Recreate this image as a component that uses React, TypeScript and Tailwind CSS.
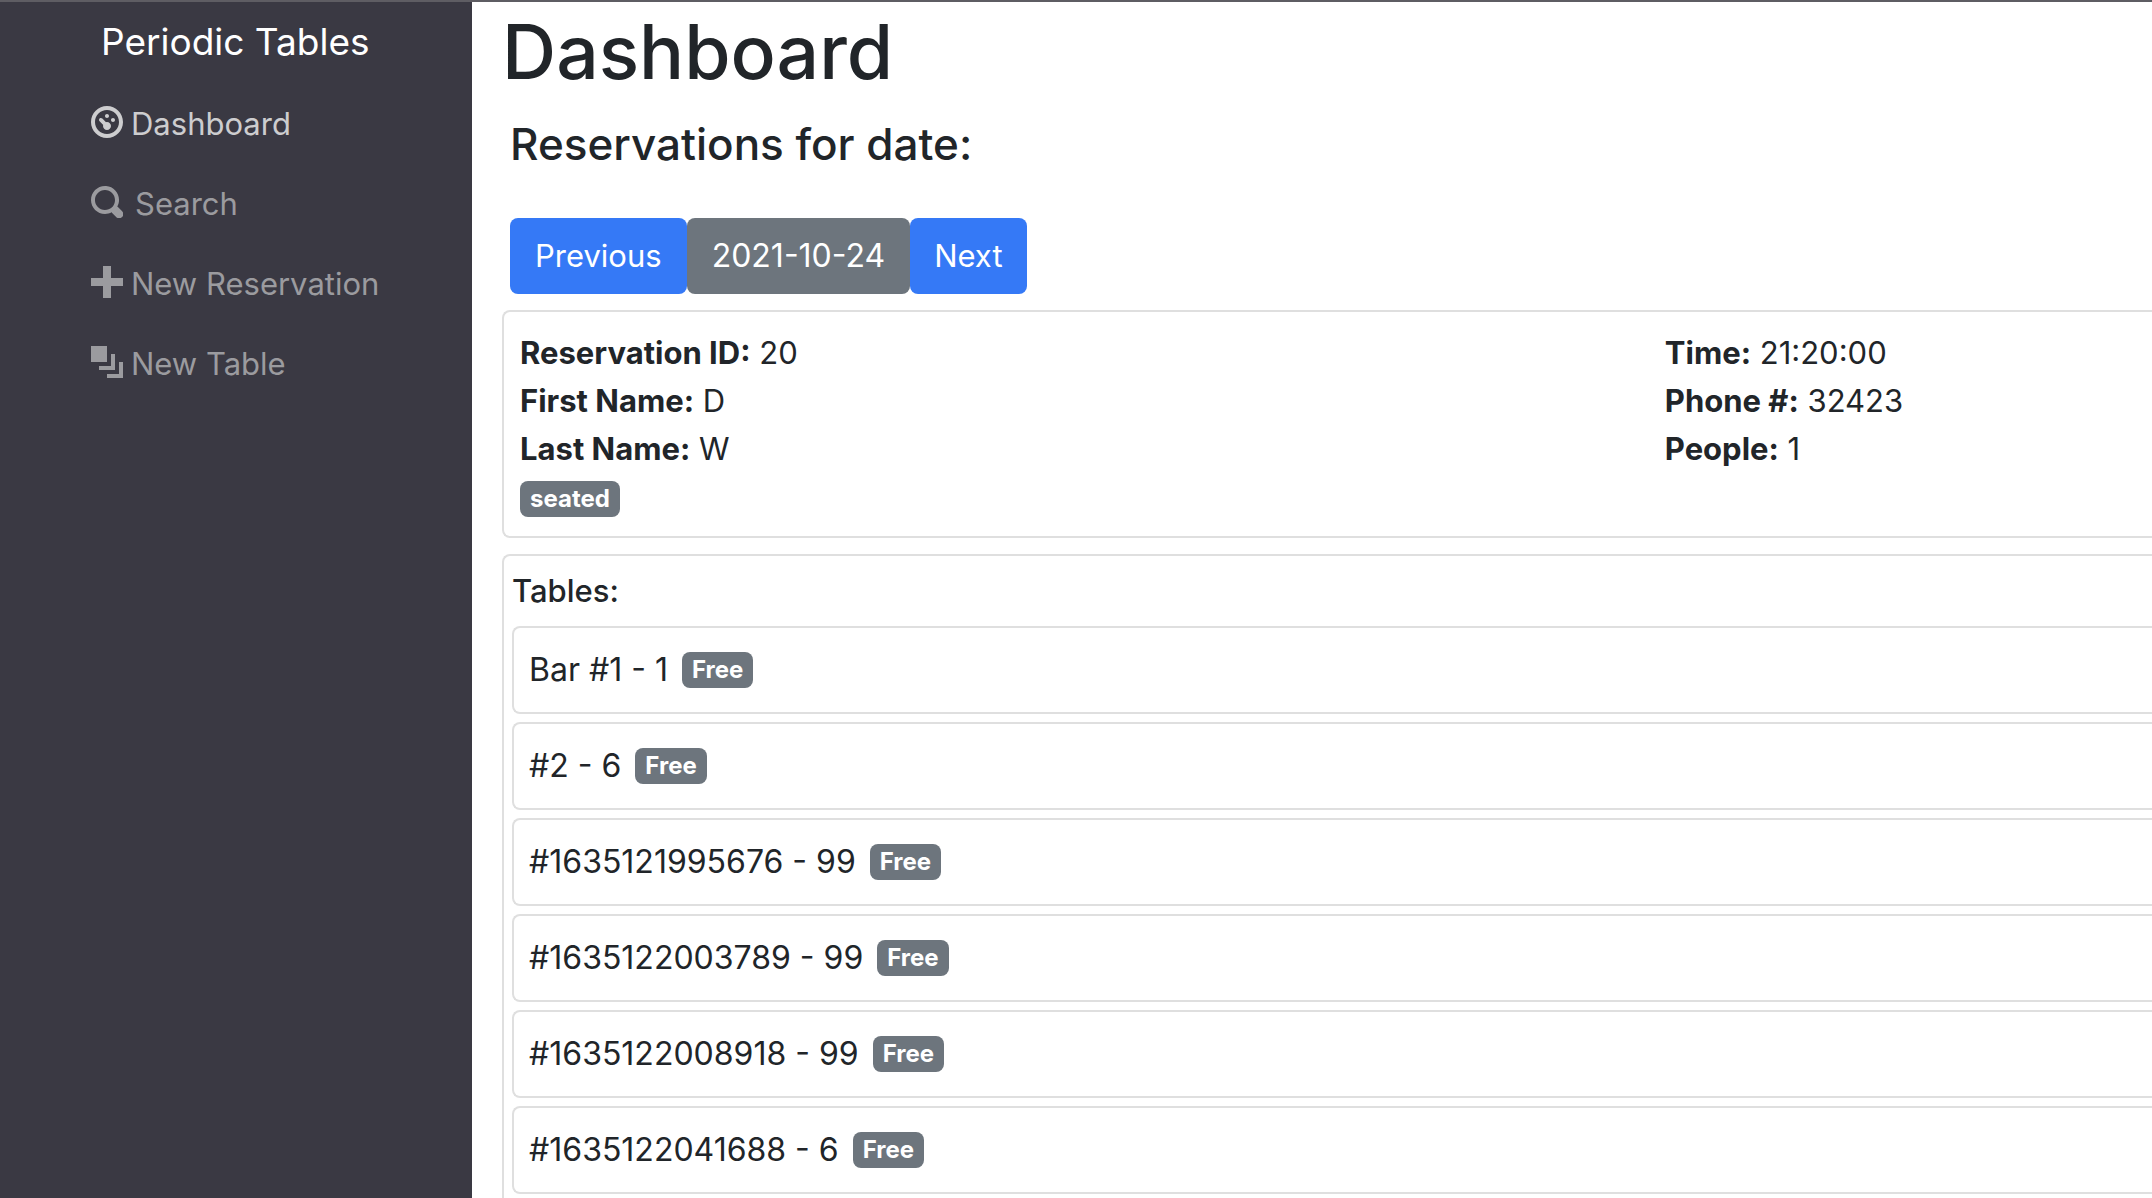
import React from "react";

const icons = {
  dashboard:
    "M4 0c-2.2 0-4 1.8-4 4s1.8 4 4 4 4-1.8 4-4-1.8-4-4-4zm0 1c1.66 0 3 1.34 3 3s-1.34 3-3 3-3-1.34-3-3 1.34-3 3-3zm0 1c-.28 0-.5.22-.5.5s.22.5.5.5.5-.22.5-.5-.22-.5-.5-.5zm-1.66 1a.5.5 0 0 0-.19.84l.91.91c-.02.08-.06.16-.06.25 0 .55.45 1 1 1s1-.45 1-1-.45-1-1-1c-.09 0-.17.04-.25.06l-.91-.91a.5.5 0 0 0-.44-.16.5.5 0 0 0-.06 0zm3.16 0c-.28 0-.5.22-.5.5s.22.5.5.5.5-.22.5-.5-.22-.5-.5-.5z",
  search:
    "M3.5 0c-1.93 0-3.5 1.57-3.5 3.5s1.57 3.5 3.5 3.5c.59 0 1.17-.14 1.66-.41a1 1 0 0 0 .13.13l1 1a1.02 1.02 0 1 0 1.44-1.44l-1-1a1 1 0 0 0-.16-.13c.27-.49.44-1.06.44-1.66 0-1.93-1.55-3.5-3.5-3.5zm0 1c1.39 0 2.5 1.11 2.5 2.5 0 .66-.24 1.27-.66 1.72-.01.01-.02.02-.03.03a1 1 0 0 0-.13.13c-.44.4-1.04.63-1.69.63-1.39 0-2.5-1.11-2.5-2.5s1.11-2.5 2.5-2.5z",
  plus: "M3 0v3h-3v2h3v3h2v-3h3v-2h-3v-3h-2z",
  layers: "M0 0v4h4v-4h-4zm5 2v3h-3v1h4v-4h-1zm2 2v3h-3v1h4v-4h-1z",
};

function NavItem({ icon, label, active = false, wide = false }: {
  icon: keyof typeof icons;
  label: string;
  active?: boolean;
  wide?: boolean;
}) {
  return (
    <li>
      <a
        href="#"
        className={`flex h-20 items-center ${wide ? "gap-3" : "gap-2"} ${active ? "text-[#cdcdcf]" : "text-[#9b9b9f]"}`}
      >
        <span className="pb-1">
          <svg viewBox="0 0 8 8" className="size-8" fill="currentColor" aria-hidden="true">
            <path d={icons[icon]} />
          </svg>
        </span>
        <span>{label}</span>
      </a>
    </li>
  );
}

function Badge({ children }: { children: React.ReactNode }) {
  return (
    <span className="inline-flex h-9 items-center rounded-lg bg-[#6d757d] px-2.5 text-2xl font-bold text-white">
      {children}
    </span>
  );
}

function Field({ label, value }: { label: string; value: string }) {
  return (
    <p>
      <strong className="font-bold">{label}</strong> {value}
    </p>
  );
}

const tables = [
  "Bar #1 - 1",
  "#2 - 6",
  "#1635121995676 - 99",
  "#1635122003789 - 99",
  "#1635122008918 - 99",
  "#1635122041688 - 6",
];

export default function App() {
  return (
    <div className="flex min-h-screen overflow-hidden border-t-2 border-[#5e5d63] bg-white font-['Inter',sans-serif] text-[31px] leading-[48px] text-[#212529]">
      <nav className="w-[472px] shrink-0 bg-[#3a3943] pl-[91px]">
        <a href="#" className="block px-2.5 pb-[18px] pt-4 text-[37px] text-white">
          Periodic Tables
        </a>
        <ul>
          <NavItem icon="dashboard" label="Dashboard" active />
          <NavItem icon="search" label="Search" wide />
          <NavItem icon="plus" label="New Reservation" />
          <NavItem icon="layers" label="New Table" />
        </ul>
      </nav>

      <main className="flex min-w-0 flex-1 flex-col pl-[30px]">
        <h1 className="pt-0.5 text-[75px] leading-[96px] font-medium">Dashboard</h1>
        <div className="px-2">
          <h2 className="pb-11 pt-3.5 text-[44px] leading-[60px] font-medium">Reservations for date:</h2>
          <div className="flex text-white">
            <button type="button" className="h-[76px] rounded-lg bg-[#3579f6] px-[25px]">Previous</button>
            <button type="button" className="h-[76px] rounded-lg bg-[#6d757d] px-[25px] text-[32px]">2021-10-24</button>
            <button type="button" className="h-[76px] rounded-lg bg-[#3579f6] px-6">Next</button>
          </div>
        </div>

        <section className="mt-4 grid grid-cols-[7fr_3fr] gap-x-2 rounded-l-lg border-2 border-r-0 border-[#dfdfdf] pb-[15px] pl-4 pt-[17px]">
          <div>
            <Field label="Reservation ID:" value="20" />
            <Field label="First Name:" value="D" />
            <Field label="Last Name:" value="W" />
            <div className="flex h-12 items-start pt-2">
              <Badge>seated</Badge>
            </div>
          </div>
          <div>
            <Field label="Time:" value="21:20:00" />
            <Field label="Phone #:" value="32423" />
            <Field label="People:" value="1" />
          </div>
        </section>

        <section className="mt-4 flex-1 rounded-tl-lg border-l-2 border-t-2 border-[#dfdfdf] pl-2">
          <h3 className="py-[11px] font-medium">Tables:</h3>
          <ul className="flex flex-col gap-2">
            {tables.map((name) => (
              <li
                key={name}
                className="flex h-[88px] items-center gap-3.5 rounded-l-lg border-2 border-r-0 border-[#dfdfdf] pl-[15px] text-[32px]"
              >
                <span>{name}</span>
                <Badge>Free</Badge>
              </li>
            ))}
          </ul>
        </section>
      </main>
    </div>
  );
}
